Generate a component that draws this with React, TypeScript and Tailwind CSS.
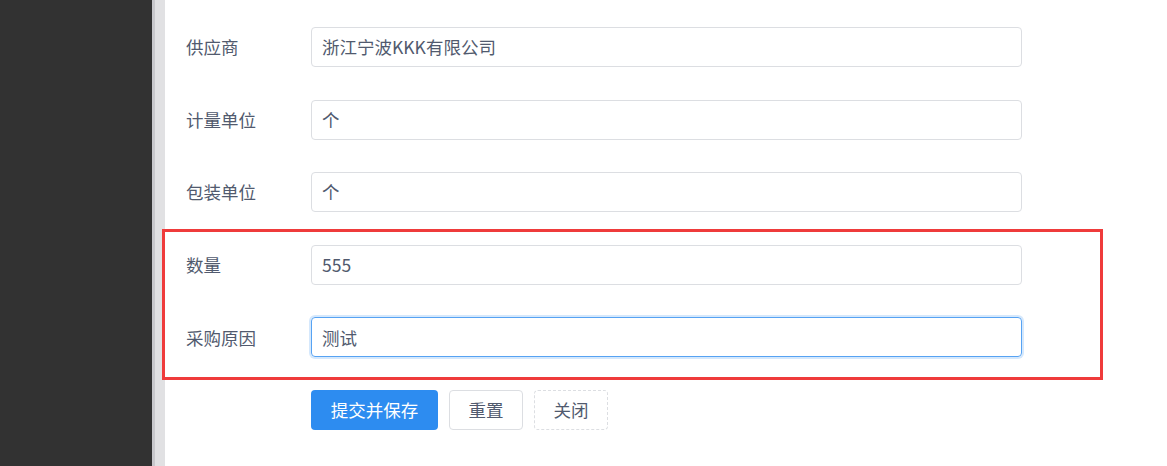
const rows = [
  { label: "供应商", value: "浙江宁波KKK有限公司" },
  { label: "计量单位", value: "个" },
  { label: "包装单位", value: "个" },
  { label: "数量", value: "555" },
  { label: "采购原因", value: "测试", focused: true },
];

export default function App() {
  return (
    <div
      className="flex h-[466px] w-full overflow-hidden bg-white text-[#515a6e]"
      style={{ fontFamily: '"Noto Sans CJK SC", "Noto Sans", sans-serif' }}
    >
      <div className="w-[152px] shrink-0 bg-[#323232]" />
      <div className="w-[13px] shrink-0 border-l-[3px] border-[#c8c8cc] bg-[#e1e1e3]" />
      <div className="relative flex-1">
        <div className="flex flex-col gap-[32.6px] pl-[21px] pt-[27px]">
          {rows.map((r) => (
            <div key={r.label} className="flex h-10 items-center">
              <div className="w-[125px] shrink-0 text-[17.5px] leading-none">{r.label}</div>
              <div
                className={
                  r.focused
                    ? "flex h-10 w-[711px] items-center rounded-[4px] border border-[#57a3f3] px-[10px] text-[17.5px] leading-none shadow-[0_0_0_2px_rgba(45,140,240,0.2)]"
                    : "flex h-10 w-[711px] items-center rounded-[4px] border border-[#dcdee2] px-[10px] text-[17.5px] leading-none"
                }
              >
                {r.value}
              </div>
            </div>
          ))}
          <div className="flex h-10 items-center gap-[11px] pl-[125px]">
            <button className="h-10 w-[127px] rounded-[4px] bg-[#2d8cf0] text-[17.5px] leading-none text-white">
              提交并保存
            </button>
            <button className="h-10 w-[74px] rounded-[4px] border border-[#dcdee2] bg-white text-[17.5px] leading-none">
              重置
            </button>
            <button className="h-10 w-[74px] rounded-[4px] border border-dashed border-[#dcdee2] bg-white text-[17.5px] leading-none">
              关闭
            </button>
          </div>
        </div>
        <div className="pointer-events-none absolute left-[-3px] top-[229px] h-[151px] w-[941px] border-[3px] border-[#ef3b3b]" />
      </div>
    </div>
  );
}
